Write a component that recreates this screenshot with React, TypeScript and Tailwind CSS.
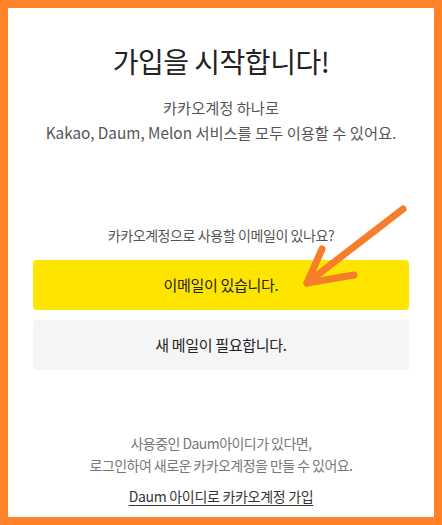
export default function App() {
  return (
    <div
      className="relative w-[442px] h-[525px] bg-[#ff8228] p-2"
      style={{ fontFamily: '"Noto Sans CJK KR", "Noto Sans", sans-serif' }}
    >
      <div className="flex h-full flex-col items-center bg-white px-[25px] pt-[35px] text-center">
        <h1 className="text-[28px] leading-[36px] tracking-[-0.5px] text-[#222]">가입을 시작합니다!</h1>
        <p className="mt-[16px] text-[15.3px] leading-[25px] text-[#555]">
          카카오계정 하나로
          <br />
          Kakao, Daum, Melon 서비스를 모두 이용할 수 있어요.
        </p>

        <p className="mt-[80px] text-[14px] leading-[20px] tracking-[-0.4px] text-[#555]">
          카카오계정으로 사용할 이메일이 있나요?
        </p>

        <button className="mt-[15px] h-[50px] w-full rounded-[4px] bg-[#fee500] text-[15px] tracking-[-0.3px] text-[#222]">
          이메일이 있습니다.
        </button>
        <button className="mt-[10px] h-[50px] w-full rounded-[4px] bg-[#f5f5f5] text-[15px] tracking-[-0.3px] text-[#222]">
          새 메일이 필요합니다.
        </button>

        <p className="mt-[62px] text-[14px] leading-[22px] tracking-[-0.55px] text-[#777]">
          사용중인 Daum아이디가 있다면,
          <br />
          로그인하여 새로운 카카오계정을 만들 수 있어요.
        </p>
        <a className="mt-[10px] text-[14px] leading-[20px] tracking-[-0.3px] text-[#333] underline underline-offset-[3px]">
          Daum 아이디로 카카오계정 가입
        </a>
      </div>

      <svg className="pointer-events-none absolute left-0 top-0" width="442" height="525" viewBox="0 0 442 525">
        <g fill="none" stroke="#f67d2b" strokeWidth="7" strokeLinecap="round" strokeLinejoin="round">
          <path d="M403 209 L307 283" />
          <path d="M322 249 L307 283 L354 275" />
        </g>
      </svg>
    </div>
  );
}
